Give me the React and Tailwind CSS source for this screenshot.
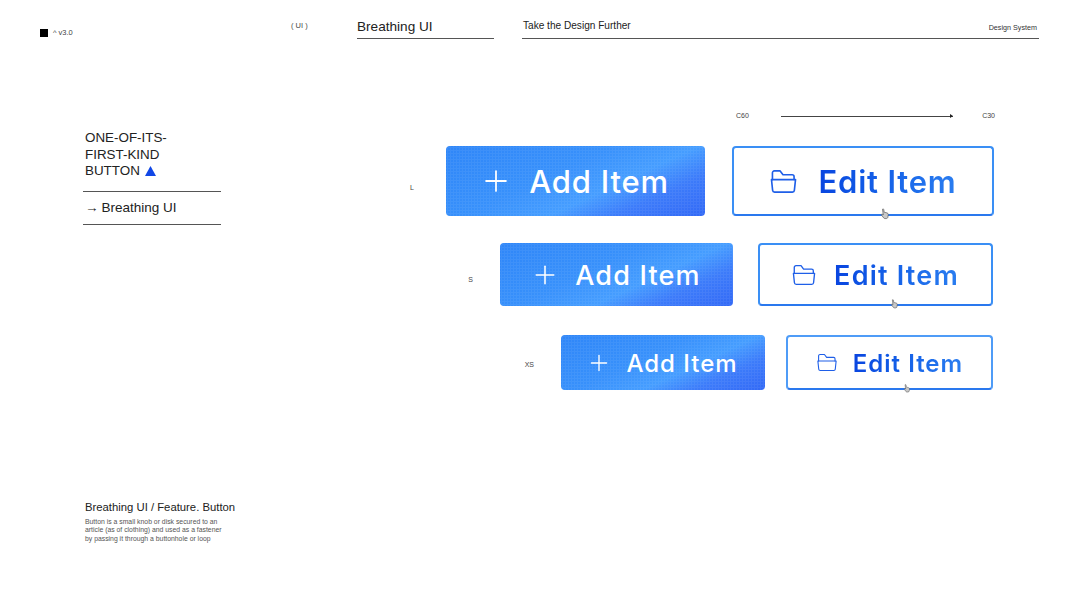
import React from 'react';
import { Plus } from 'lucide-react';

const addBg = "bg-[radial-gradient(rgba(255,255,255,0.06)_1px,transparent_1.2px),linear-gradient(155deg,#2f86f8_0%,#3790fb_40%,#459dff_62%,#3c7bfa_78%,#3269f6_100%)] [background-size:3px_3px,100%_100%]";

function FolderIcon({ className }) {
  return (
    <svg className={className} viewBox="0 0 28 26" fill="none" stroke="currentColor" strokeLinejoin="round" strokeLinecap="round">
      <path d="M2.5 11V4a2 2 0 0 1 2-2h6l3 4h9.5a2 2 0 0 1 2 2v3" />
      <path d="M1.5 11h25l-1.2 11.2a2 2 0 0 1-2 1.8H4.7a2 2 0 0 1-2-1.8z" />
    </svg>
  );
}

function Hand({ className }) {
  return (
    <svg className={className} viewBox="0 0 12 14">
      <path d="M3 1.2c.7-.6 1.5-.2 1.6.6l.3 3 3.6.9c1 .3 1.5 1 1.4 2l-.4 3c-.1 1-.9 1.8-2 1.8H6c-.8 0-1.4-.4-1.8-1L1.8 8.200c-.5-.8.5-1.600 1.300-1L3.900 8z" fill="#c9c9c9" stroke="#555" strokeWidth="0.8" strokeLinejoin="round" />
    </svg>
  );
}

function SizeRow({ label, labelClass, addClass, editClass, plusClass, folderClass, textClass, handClass, addGapClass, editGapClass }) {
  return (
    <div className="flex items-center">
      <span className={`text-[7px] text-[#444] ${labelClass}`}>{label}</span>
      <button className={`flex items-center justify-center rounded-[4px] text-white ${addBg} ${addClass} ${addGapClass}`}>
        <Plus className={plusClass} strokeWidth={1.25} />
        <span className={`font-['Inter',sans-serif] font-medium ${textClass}`}>Add Item</span>
      </button>
      <button className={`relative flex items-center justify-center rounded-[4px] border-[#3a8ff5] border-b-[#2a78ee] bg-white ${editClass} ${editGapClass}`}>
        <FolderIcon className={`text-[#1f5fe8] ${folderClass}`} />
        <span className={`bg-gradient-to-r from-[#0a45e0] to-[#2a7df0] bg-clip-text font-['Inter',sans-serif] font-semibold text-transparent ${textClass}`}>Edit Item</span>
        <Hand className={`absolute ${handClass}`} />
      </button>
    </div>
  );
}

export default function App() {
  return (
    <div className="flex h-[607px] w-[1079px] flex-col overflow-hidden bg-white pb-[64px] font-['Liberation_Sans',Arial,sans-serif] text-[#222]">
      <header className="flex h-[39px] shrink-0 pl-[40px]">
        <div className="flex w-[251px] items-start gap-[5px] pt-[29px]">
          <span className="h-[8px] w-[8px] bg-black" />
          <span className="text-[7.5px] leading-[7px] text-[#444]">^ v3.0</span>
        </div>
        <div className="w-[66px] pt-[20px] text-[7.5px] text-[#444]">( UI )</div>
        <div className="flex w-[137px] items-end border-b border-[#555] pb-[2px] text-[13.6px] leading-[18px]">Breathing UI</div>
        <div className="ml-[28px] flex w-[517px] items-end justify-between border-b border-[#555] pb-[6px] pl-px pr-[2px]">
          <span className="text-[10.1px] leading-[12px]">Take the Design Further</span>
          <span className="text-[7.2px] leading-[9px] text-[#333]">Design System</span>
        </div>
      </header>

      <main className="flex flex-1">
        <section className="ml-[83px] mt-[91px] w-[138px]">
          <h1 className="pl-[2px] text-[13.4px] leading-[16.5px]">
            ONE-OF-ITS-<br />FIRST-KIND<br />
            <span className="inline-flex items-center gap-[5px]">BUTTON
              <svg className="h-[10px] w-[11px]" viewBox="0 0 11 10"><path d="M5.500 0 11 10H0z" fill="#1147e6" /></svg>
            </span>
          </h1>
          <div className="mt-[11px] flex h-[34px] items-center gap-[3px] border-y border-[#555] pl-[2px] pt-[2px] text-[13.5px]">
            <span className="-mt-[2px] font-bold leading-none">→</span>
            <span>Breathing UI</span>
          </div>
        </section>

        <section className="flex flex-1 flex-col items-end pr-[85px] pt-[71px]">
          <div className="-mr-px flex h-[12px] w-[259px] items-center justify-between text-[7px] text-[#444]">
            <span>C60</span>
            <span className="relative ml-[2px] h-px w-[172px] bg-[#444]">
              <span className="absolute -top-[1.5px] right-0 border-y-[2px] border-l-[3px] border-y-transparent border-l-[#222]" />
            </span>
            <span>C30</span>
          </div>
          <div className="mt-[24px] flex flex-col items-end">
            <SizeRow label="L" labelClass="mt-[15px] mr-[32px]"
              addClass="h-[70px] w-[259px] mr-[27px] pr-[3px]" addGapClass="gap-[16px]"
              editClass="h-[70px] w-[262px] border-2" editGapClass="gap-[20px]"
              plusClass="h-[34px] w-[34px]" folderClass="h-[25px] w-[29px] stroke-[1.7]"
              textClass="pt-[2px] text-[31px] tracking-[0.8px]" handClass="bottom-[-6px] left-[146px] h-[12px] w-[10px]" />
            <div className="h-[27px]" />
            <SizeRow label="S" labelClass="mt-[11px] mr-[27px]"
              addClass="h-[63px] w-[233px] mr-[25px] pr-[2px]" addGapClass="gap-[15px]"
              editClass="h-[63px] w-[235px] border-2 mr-px" editGapClass="gap-[18px]"
              plusClass="h-[30px] w-[30px]" folderClass="h-[22px] w-[24px] stroke-[1.6]"
              textClass="pt-[4px] text-[27px] tracking-[1.2px]" handClass="bottom-[-5px] left-[130px] h-[10px] w-[9px]" />
            <div className="h-[29px]" />
            <SizeRow label="XS" labelClass="mt-[5px] mr-[27px]"
              addClass="h-[55px] w-[204px] mr-[21px] pr-[2px]" addGapClass="gap-[14px]"
              editClass="h-[55px] w-[207px] border-2 border-[#4f9cf7] mr-px" editGapClass="gap-[15px]"
              plusClass="h-[26px] w-[26px]" folderClass="h-[19px] w-[22px] stroke-[1.5]"
              textClass="pt-[2px] text-[24px] tracking-[1px]" handClass="bottom-[-5px] left-[115px] h-[9px] w-[8px]" />
          </div>
        </section>
      </main>

      <footer className="ml-[85px] shrink-0">
        <h2 className="text-[11.3px] leading-[14px]">Breathing UI / Feature. Button</h2>
        <p className="mt-[4px] w-[150px] text-[6.85px] leading-[8.5px] text-[#555]">
          Button is a small knob or disk secured to an<br />article (as of clothing) and used as a fastener<br />by passing it through a buttonhole or loop
        </p>
      </footer>
    </div>
  );
}
